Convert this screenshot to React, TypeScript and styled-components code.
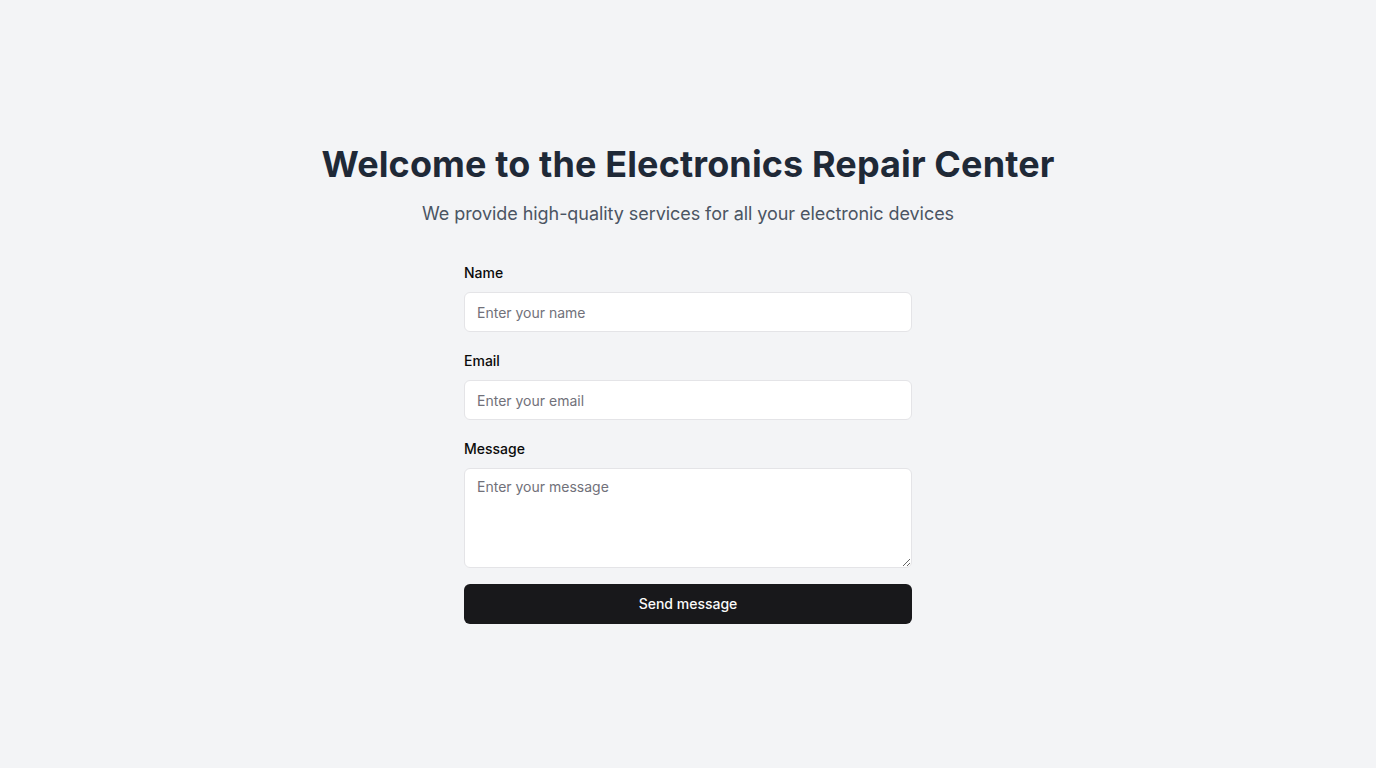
import React from "react";
import styled, { createGlobalStyle } from "styled-components";

const GlobalStyle = createGlobalStyle`
  * { box-sizing: border-box; }
  html, body { margin: 0; padding: 0; }
  body {
    background: #f3f4f6;
    font-family: Inter, "Noto Sans", Arial, sans-serif;
  }
`;

const Page = styled.main`
  min-height: 100vh;
  display: flex;
  flex-direction: column;
  align-items: center;
  justify-content: center;
`;

const Title = styled.h1`
  margin: 0 0 16px;
  font-size: 36px;
  line-height: 40px;
  font-weight: 700;
  letter-spacing: 0.12px;
  color: #1f2937;
  text-align: center;
`;

const Subtitle = styled.p`
  margin: 0 0 36px;
  font-size: 18px;
  line-height: 28px;
  letter-spacing: -0.06px;
  color: #4b5563;
  text-align: center;
`;

const Form = styled.form`
  width: 448px;
  display: flex;
  flex-direction: column;
`;

const Field = styled.div<{ $last?: boolean }>`
  display: flex;
  flex-direction: column;
  margin-bottom: ${(p) => (p.$last ? "16px" : "20px")};
`;

const Label = styled.label`
  font-size: 14px;
  line-height: 18px;
  font-weight: 500;
  color: #0a0a0a;
  margin-bottom: 10px;
`;

const Input = styled.input`
  height: 40px;
  width: 100%;
  border: 1px solid #e4e4e7;
  border-radius: 6px;
  background: #ffffff;
  padding: 0 12px;
  font-family: inherit;
  font-size: 14px;
  color: #0a0a0a;
  outline: none;
  &::placeholder { color: #71717a; }
`;

const TextArea = styled.textarea`
  height: 100px;
  width: 100%;
  border: 1px solid #e4e4e7;
  border-radius: 6px;
  background: #ffffff;
  padding: 8px 12px;
  font-family: inherit;
  font-size: 14px;
  line-height: 20px;
  color: #0a0a0a;
  outline: none;
  resize: vertical;
  display: block;
  &::placeholder { color: #71717a; }
`;

const Button = styled.button`
  height: 40px;
  width: 100%;
  border: none;
  border-radius: 6px;
  background: #18181b;
  color: #fafafa;
  font-family: inherit;
  font-size: 14px;
  font-weight: 500;
  padding: 0 0 2px;
  cursor: pointer;
`;

export default function App() {
  return (
    <>
      <GlobalStyle />
      <Page>
        <Title>Welcome to the Electronics Repair Center</Title>
        <Subtitle>We provide high-quality services for all your electronic devices</Subtitle>
        <Form onSubmit={(e) => e.preventDefault()}>
          <Field>
            <Label htmlFor="name">Name</Label>
            <Input id="name" placeholder="Enter your name" />
          </Field>
          <Field>
            <Label htmlFor="email">Email</Label>
            <Input id="email" type="email" placeholder="Enter your email" />
          </Field>
          <Field $last>
            <Label htmlFor="message">Message</Label>
            <TextArea id="message" placeholder="Enter your message" />
          </Field>
          <Button type="submit">Send message</Button>
        </Form>
      </Page>
    </>
  );
}
